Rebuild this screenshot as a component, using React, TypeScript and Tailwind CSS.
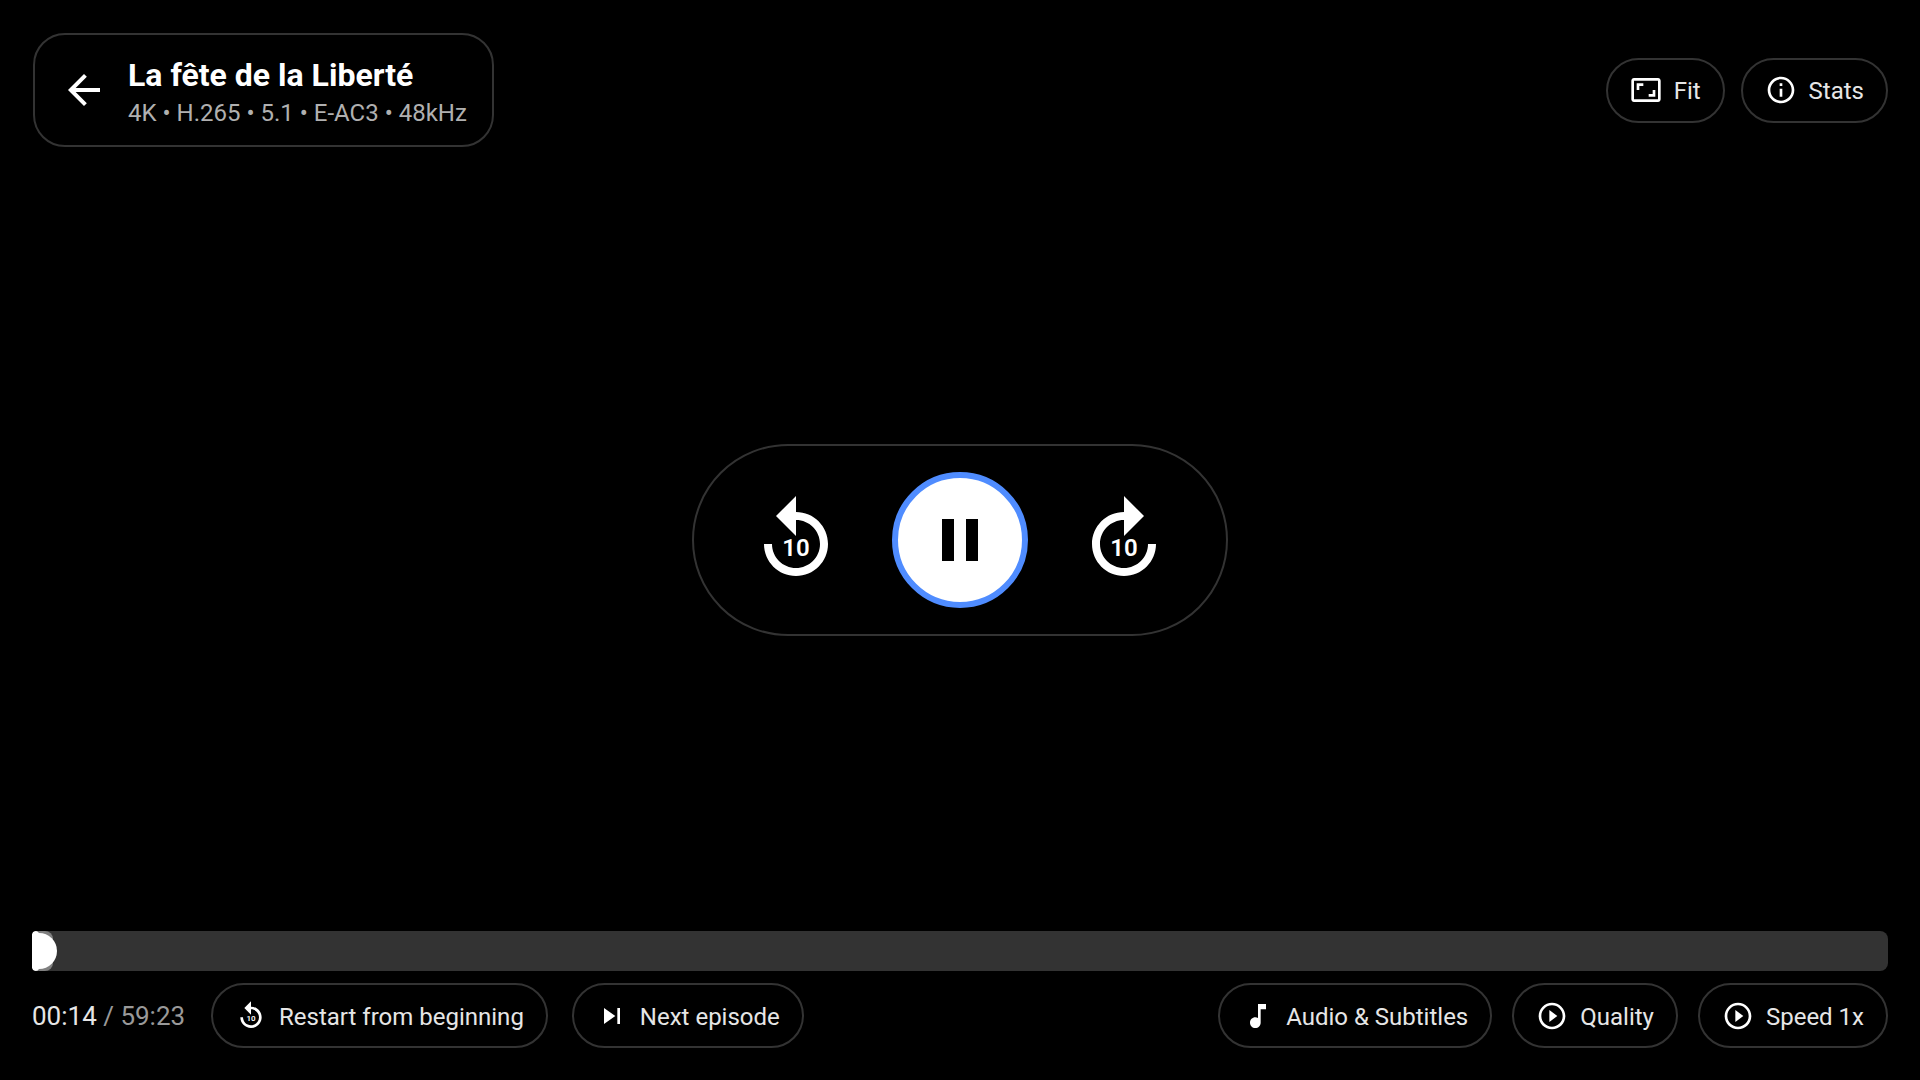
import { useState } from 'react';
import type { ReactNode } from 'react';

const DURATION = 59 * 60 + 23;

const formatTime = (seconds: number) => {
  const m = String(Math.floor(seconds / 60)).padStart(2, '0');
  const s = String(seconds % 60).padStart(2, '0');
  return `${m}:${s}`;
};

const ICONS = {
  back: 'M20 11H7.83l5.59-5.59L12 4l-8 8 8 8 1.41-1.41L7.83 13H20v-2z',
  fit: 'M19 12h-2v3h-3v2h5v-5zM7 9h3V7H5v5h2V9zm14-6H3c-1.1 0-2 .9-2 2v14c0 1.1.9 2 2 2h18c1.1 0 2-.9 2-2V5c0-1.1-.9-2-2-2zm0 16.01H3V4.99h18v14.02z',
  info: 'M11 7h2v2h-2zm0 4h2v6h-2zm1-9C6.48 2 2 6.48 2 12s4.48 10 10 10 10-4.48 10-10S17.52 2 12 2zm0 18c-4.41 0-8-3.59-8-8s3.59-8 8-8 8 3.59 8 8-3.59 8-8 8z',
  pause: 'M6 19h4V5H6v14zm8-14v14h4V5h-4z',
  replay: 'M12 5V1L7 6l5 5V7c3.31 0 6 2.69 6 6s-2.69 6-6 6-6-2.69-6-6H4c0 4.42 3.58 8 8 8s8-3.58 8-8-3.58-8-8-8z',
  forward: 'M18 13c0 3.31-2.69 6-6 6s-6-2.69-6-6 2.69-6 6-6v4l5-5-5-5v4c-4.42 0-8 3.58-8 8s3.58 8 8 8 8-3.58 8-8h-2z',
  next: 'M6 18l8.5-6L6 6v12zM16 6v12h2V6h-2z',
  music: 'M12 3v10.55c-.59-.34-1.27-.55-2-.55-2.21 0-4 1.79-4 4s1.79 4 4 4 4-1.79 4-4V7h4V3h-6z',
  play: 'M10 16.5l6-4.5-6-4.5v9zM12 2C6.48 2 2 6.48 2 12s4.48 10 10 10 10-4.48 10-10S17.52 2 12 2zm0 18c-4.41 0-8-3.59-8-8s3.59-8 8-8 8 3.59 8 8-3.59 8-8 8z',
};

type IconName = keyof typeof ICONS;

function Icon({ name, label, className = 'size-8' }: { name: IconName; label?: string; className?: string }) {
  return (
    <svg viewBox="0 0 24 24" fill="currentColor" aria-hidden="true" className={`shrink-0 ${className}`}>
      <path d={ICONS[name]} />
      {label && (
        <text x="12" y="16" fontSize="6" fontWeight="600" textAnchor="middle">
          {label}
        </text>
      )}
    </svg>
  );
}

function PillButton({ icon, label, children }: { icon: IconName; label?: string; children: ReactNode }) {
  return (
    <button
      type="button"
      className="flex h-[65px] items-center gap-3 whitespace-nowrap rounded-full border-2 border-[#333333] px-[22px] text-2xl text-white"
    >
      <Icon name={icon} label={label} />
      <span className="pt-0.5 text-[#e6e6e6]">{children}</span>
    </button>
  );
}

export default function App() {
  const [position, setPosition] = useState(14);
  const percent = (position / DURATION) * 100;

  return (
    <div className="flex min-h-screen flex-col justify-between bg-black px-8 pb-8 pt-[33px] font-['Roboto','Noto_Sans',sans-serif] text-white">
      <header className="flex items-center justify-between">
        <div className="ml-px flex items-center gap-5 rounded-[32px] border-2 border-[#333333] pl-[25px] pr-[25px]">
          <button type="button" aria-label="Back">
            <Icon name="back" className="size-12" />
          </button>
          <div className="pb-4 pt-5">
            <h1 className="text-[32px] font-bold leading-10">La fête de la Liberté</h1>
            <p className="mt-0.5 text-2xl leading-8 text-[#b0b0b0]">4K • H.265 • 5.1 • E-AC3 • 48kHz</p>
          </div>
        </div>
        <div className="flex gap-4">
          <PillButton icon="fit">Fit</PillButton>
          <PillButton icon="info">Stats</PillButton>
        </div>
      </header>

      {/* Transport controls */}
      <div className="mt-0.5 flex items-center gap-12 self-center rounded-full border-2 border-[#333333] px-[54px] py-[26px]">
        <button type="button" aria-label="Back 10 seconds">
          <Icon name="replay" label="10" className="size-24" />
        </button>
        <button
          type="button"
          aria-label="Pause"
          className="flex size-[136px] items-center justify-center rounded-full border-6 border-[#4f8cff] bg-white text-black"
        >
          <Icon name="pause" className="size-[72px]" />
        </button>
        <button type="button" aria-label="Forward 10 seconds">
          <Icon name="forward" label="10" className="size-24" />
        </button>
      </div>

      <footer>
        <div className="relative h-10 overflow-hidden rounded-l-sm rounded-r-lg bg-[#333333]">
          {/* Buffered range, played range and thumb */}
          <div className="absolute inset-y-0 left-0 w-[21px] rounded-lg bg-[#808080]" />
          <div className="absolute inset-y-0 left-0 rounded-lg bg-white" style={{ width: `${percent}%` }} />
          <div
            className="absolute top-0.5 size-9 -translate-x-1/2 rounded-full bg-white"
            style={{ left: `${percent}%` }}
          />
          <input
            type="range"
            aria-label="Seek"
            min={0}
            max={DURATION}
            value={position}
            onChange={(e) => setPosition(Number(e.target.value))}
            className="absolute inset-0 h-full w-full cursor-pointer opacity-0"
          />
        </div>

        <div className="mt-3 flex items-center justify-between">
          <div className="flex items-center gap-6">
            <p className="min-w-[155px] whitespace-nowrap pt-0.5 text-[26px] text-[#e6e6e6]">
              {formatTime(position)} <span className="text-[#999999]">/ {formatTime(DURATION)}</span>
            </p>
            <PillButton icon="replay" label="10">Restart from beginning</PillButton>
            <PillButton icon="next">Next episode</PillButton>
          </div>
          <div className="flex items-center gap-5">
            <PillButton icon="music">Audio &amp; Subtitles</PillButton>
            <PillButton icon="play">Quality</PillButton>
            <PillButton icon="play">Speed 1x</PillButton>
          </div>
        </div>
      </footer>
    </div>
  );
}
